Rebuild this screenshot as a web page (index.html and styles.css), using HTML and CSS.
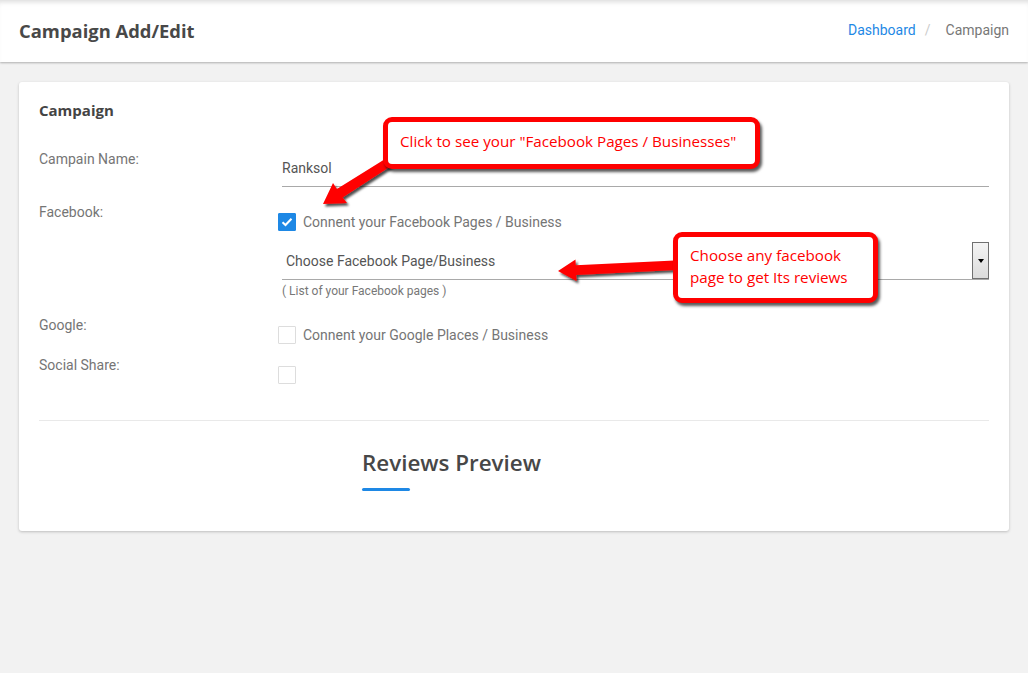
FILE: index.html
```html
<!DOCTYPE html>
<html>
<head>
<meta charset="utf-8">
<title>Campaign Add/Edit</title>
<link rel="stylesheet" href="styles.css">
</head>
<body>
<header class="topbar">
  <h1 class="page-title">Campaign Add/Edit</h1>
  <nav class="crumbs">
    <a class="crumb-link" href="#">Dashboard</a>
    <span class="crumb-sep">/</span>
    <span class="crumb-current">Campaign</span>
  </nav>
</header>

<main class="content">
  <section class="card">
    <h2 class="card-title">Campaign</h2>

    <div class="row row-name">
      <div class="label">Campain Name:</div>
      <div class="field">
        <div class="text-input">Ranksol</div>
      </div>
    </div>

    <div class="row row-fb">
      <div class="label">Facebook:</div>
      <div class="field field-pad">
        <label class="check-line">
          <span class="box checked">
            <svg width="12" height="10" viewBox="0 0 12 10"><path d="M1.5 5.2 L4.5 8 L10.5 1.8" fill="none" stroke="#fff" stroke-width="2"/></svg>
          </span>
          <span>Connent your Facebook Pages / Business</span>
        </label>
        <div class="select">
          <span class="select-text">Choose Facebook Page/Business</span>
          <span class="select-btn"><span class="tri"></span></span>
        </div>
        <div class="help">( List of your Facebook pages )</div>
      </div>
    </div>

    <div class="row row-google">
      <div class="label">Google:</div>
      <div class="field field-pad">
        <label class="check-line">
          <span class="box"></span>
          <span>Connent your Google Places / Business</span>
        </label>
      </div>
    </div>

    <div class="row row-social">
      <div class="label">Social Share:</div>
      <div class="field field-pad">
        <label class="check-line">
          <span class="box"></span>
        </label>
      </div>
    </div>

    <hr class="divider">

    <div class="preview">
      <h3 class="preview-title">Reviews Preview</h3>
      <div class="preview-bar"></div>
    </div>
  </section>
</main>

<svg class="arrows" width="1028" height="673" viewBox="0 0 1028 673">
  <defs>
    <filter id="sh" x="-20%" y="-20%" width="140%" height="160%">
      <feDropShadow dx="2" dy="2.5" stdDeviation="1.2" flood-color="#000" flood-opacity="0.7"/>
    </filter>
  </defs>
  <polygon filter="url(#sh)" fill="#ff0000" points="323,204 333,183 336.9,188.9 389.5,156.2 394.5,163.8 342.6,197.5 347,203"/>
  <polygon filter="url(#sh)" fill="#ff0000" points="558,271 575.5,259.6 575.8,265.3 679.8,260.2 680.2,269.8 576.2,274.9 576.5,281"/>
</svg>

<div class="callout callout-1">Click to see your "Facebook Pages / Businesses"</div>
<div class="callout callout-2">Choose any facebook<br>page to get Its reviews</div>
</body>
</html>
```

FILE: styles.css
```css
html, body {
  margin: 0;
  padding: 0;
}
body {
  background: #f2f2f2;
  font-family: Roboto, "Liberation Sans", Arial, sans-serif;
  font-size: 14px;
  color: #777;
  width: 1028px;
  height: 673px;
  overflow: hidden;
  position: relative;
}

.topbar {
  height: 62px;
  background: #fff;
  display: flex;
  align-items: center;
  justify-content: space-between;
  padding: 0 19px;
  box-shadow: inset 0 5px 5px -3px rgba(0,0,0,0.14), 0 1px 2px rgba(0,0,0,0.28);
  position: relative;
}
.page-title {
  margin: 0 0 2px;
  font-family: "Open Sans", "Noto Sans", sans-serif;
  font-weight: 700;
  font-size: 18.4px;
  color: #484848;
}
.crumbs {
  display: flex;
  align-items: center;
  font-size: 14px;
  margin-bottom: 2px;
}
.crumb-link {
  color: #1e88e5;
  text-decoration: none;
}
.crumb-sep {
  color: #ccc;
  margin: 0 15px 0 9px;
}
.crumb-current {
  color: #777;
}

.content {
  padding: 20px 19px;
}
.card {
  background: #fff;
  border-radius: 3px;
  box-shadow: 0 1px 3px rgba(0,0,0,0.22);
  padding: 18px 20px 40px;
  height: 391px;
}
.card-title {
  margin: 0;
  font-family: "Open Sans", "Noto Sans", sans-serif;
  font-weight: 700;
  font-size: 15px;
  line-height: 20px;
  color: #444;
}

.row {
  display: grid;
  grid-template-columns: 243px 1fr;
}
.row-name { margin-top: 29px; }
.row-fb { margin-top: 15px; }
.row-google { margin-top: 17px; }
.row-social { margin-top: 10px; }

.label {
  line-height: 20px;
  color: #757575;
}
.field-pad {
  padding-top: 10px;
}
.text-input {
  height: 36px;
  line-height: 36px;
  border-bottom: 1px solid #a9a9a9;
  color: #555;
  padding-top: 1px;
}
.check-line {
  display: flex;
  align-items: center;
  height: 20px;
  color: #757575;
}
.box {
  width: 16px;
  height: 16px;
  border: 1px solid #ddd;
  border-radius: 1px;
  margin: 0 7px 0 -4px;
  display: flex;
  align-items: center;
  justify-content: center;
  box-sizing: content-box;
}
.box.checked {
  background: #1e88e5;
  border-color: #1e88e5;
}
.select {
  margin-top: 10px;
  height: 37px;
  border-bottom: 1px solid #a9a9a9;
  display: flex;
  align-items: center;
  justify-content: space-between;
  position: relative;
}
.select-text {
  color: #555;
  padding-left: 4px;
}
.select-btn {
  width: 15px;
  height: 35px;
  border: 1px solid #707070;
  background: linear-gradient(#f4f4f4, #dcdcdc);
  display: flex;
  align-items: center;
  justify-content: center;
  align-self: flex-start;
}
.tri {
  width: 0;
  height: 0;
  border-left: 3.5px solid transparent;
  border-right: 3.5px solid transparent;
  border-top: 4px solid #000;
}
.help {
  margin-top: 4px;
  font-size: 12px;
  line-height: 14px;
  color: #777;
}

.divider {
  margin: 35px 0 0;
  border: 0;
  border-top: 1px solid #e9e9e9;
}
.preview {
  padding-left: 323px;
  padding-top: 27px;
}
.preview-title {
  margin: 0;
  font-family: "Open Sans", "Noto Sans", sans-serif;
  font-weight: 600;
  font-size: 22.4px;
  line-height: 30px;
  color: #474747;
}
.preview-bar {
  margin-top: 10px;
  width: 48px;
  height: 3px;
  border-radius: 2px;
  background: #1e88e5;
}

.arrows {
  position: absolute;
  left: 0;
  top: 0;
  pointer-events: none;
}
.callout {
  position: absolute;
  box-sizing: border-box;
  background: #fff;
  border: 5px solid #ff0000;
  border-radius: 9px;
  box-shadow: 2px 3px 3px rgba(0,0,0,0.65);
  color: #ff0000;
  font-family: "Open Sans", "Noto Sans", sans-serif;
  font-size: 15.2px;
  padding-left: 12px;
}
.callout-1 {
  left: 383px;
  top: 117px;
  width: 377px;
  height: 52px;
  line-height: 38px;
}
.callout-2 {
  left: 673px;
  top: 232px;
  width: 205px;
  height: 71px;
  line-height: 22px;
  padding-top: 7px;
}
```
